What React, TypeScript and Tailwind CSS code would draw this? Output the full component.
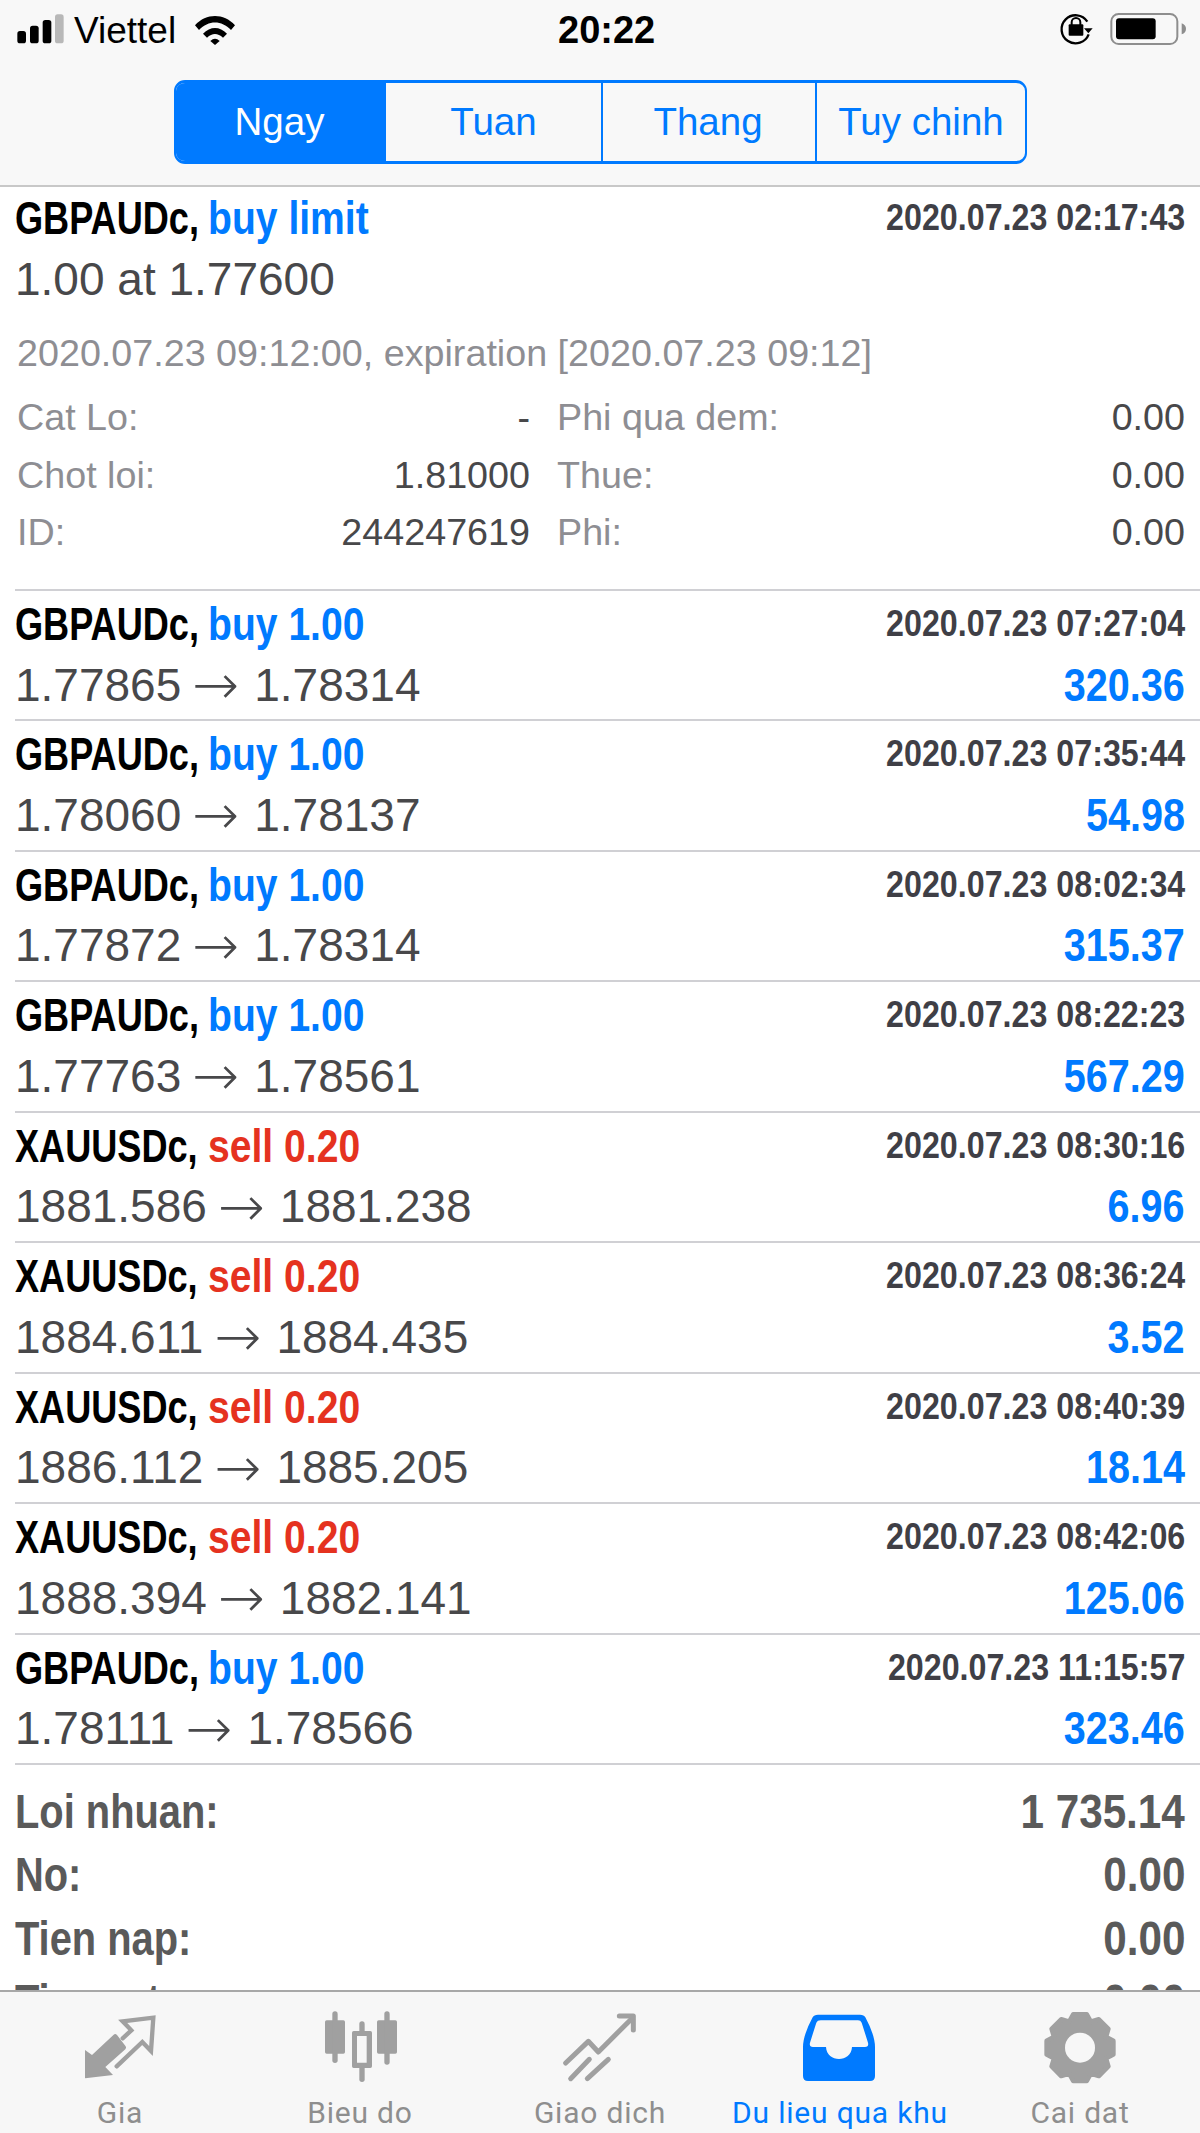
const deals = [
  { sym: "GBPAUDc,", side: "buy 1.00", open: "1.77865", close: "1.78314", time: "2020.07.23 07:27:04", profit: "320.36" },
  { sym: "GBPAUDc,", side: "buy 1.00", open: "1.78060", close: "1.78137", time: "2020.07.23 07:35:44", profit: "54.98" },
  { sym: "GBPAUDc,", side: "buy 1.00", open: "1.77872", close: "1.78314", time: "2020.07.23 08:02:34", profit: "315.37" },
  { sym: "GBPAUDc,", side: "buy 1.00", open: "1.77763", close: "1.78561", time: "2020.07.23 08:22:23", profit: "567.29" },
  { sym: "XAUUSDc,", side: "sell 0.20", open: "1881.586", close: "1881.238", time: "2020.07.23 08:30:16", profit: "6.96" },
  { sym: "XAUUSDc,", side: "sell 0.20", open: "1884.611", close: "1884.435", time: "2020.07.23 08:36:24", profit: "3.52" },
  { sym: "XAUUSDc,", side: "sell 0.20", open: "1886.112", close: "1885.205", time: "2020.07.23 08:40:39", profit: "18.14" },
  { sym: "XAUUSDc,", side: "sell 0.20", open: "1888.394", close: "1882.141", time: "2020.07.23 08:42:06", profit: "125.06" },
  { sym: "GBPAUDc,", side: "buy 1.00", open: "1.78111", close: "1.78566", time: "2020.07.23 11:15:57", profit: "323.46" },
];

const summary = [
  ["Loi nhuan:", "1 735.14"],
  ["No:", "0.00"],
  ["Tien nap:", "0.00"],
  ["Tien rut:", "0.00"],
];

// gear outline, 8 teeth, in the 300x270 icon box
const gearPath = () => {
  const pts: string[] = [];
  for (let i = 0; i < 8; i++) {
    const a = (i * Math.PI) / 4;
    [[-0.4, 84], [-0.2, 102], [0.2, 102], [0.4, 84]].forEach(([d, r]) => {
      pts.push(`${(150 + r * Math.cos(a + d)).toFixed(1)} ${(137 + r * Math.sin(a + d)).toFixed(1)}`);
    });
  }
  return "M" + pts.join("L") + "Z";
};

const Title = ({ sym, side, sell }: { sym: string; side: string; sell?: boolean }) => (
  <div className="flex whitespace-nowrap text-[46px] leading-[50px] font-bold">
    <div className="w-[193px]">
      <span className="inline-block origin-left scale-x-[.785] text-black">{sym}</span>
    </div>
    <span className={`inline-block origin-left scale-x-[.85] ${sell ? "text-[#e5321f]" : "text-[#007aff]"}`}>{side}</span>
  </div>
);

const Stamp = ({ children }: { children: string }) => (
  <span className="inline-block origin-right scale-x-[.895] whitespace-nowrap text-[36px] leading-[40px] font-bold text-[#3f3f46]">
    {children}
  </span>
);

const Detail = ({ label, value }: { label: string; value: string }) => (
  <div className="flex h-[57.5px] items-center justify-between text-[37.7px]">
    <span className="text-[#8e8e93]">{label}</span>
    <span className="text-[#48484a]">{value}</span>
  </div>
);

const TabItem = ({ label, active, children }: { label: string; active?: boolean; children: React.ReactNode }) => (
  <div className="flex flex-col items-center">
    <svg width="100" height="90" viewBox="0 0 300 270" className="mt-[10px]">
      {children}
    </svg>
    <span className={`mt-[4px] whitespace-nowrap font-['Roboto',sans-serif] text-[30px] leading-[34px] tracking-[0.8px] ${active ? "text-[#007aff]" : "text-[#8e8e8e]"}`}>
      {label}
    </span>
  </div>
);

export default function App() {
  return (
    <div className="flex h-[2133px] w-[1200px] flex-col overflow-hidden bg-white font-['Liberation_Sans',sans-serif]">
      <header className="h-[187px] shrink-0 border-b-2 border-[#c8c8c8] bg-[#f8f8f8]">
        <div className="flex h-[60px] items-center">
          <div className="flex w-[558px] items-center">
            <svg width="64" height="50" viewBox="0 0 192 150">
              <rect x="52" y="78" width="26" height="37" rx="8" fill="#000" />
              <rect x="90" y="62" width="26" height="53" rx="8" fill="#000" />
              <rect x="128" y="45" width="26" height="70" rx="8" fill="#000" />
              <rect x="165" y="28" width="26" height="87" rx="8" fill="#b8b8b8" />
            </svg>
            <span className="ml-[10px] text-[37px] leading-none text-black">Viettel</span>
            <svg width="40" height="29" viewBox="0 0 120 87" className="ml-[19px]">
              <path d="M0 28C34-9 86-9 120 28L108 42C80 12 40 12 12 42Z" fill="#000" />
              <path d="M24 53C46 30 74 30 96 53L84 65C68 50 52 50 36 65Z" fill="#000" />
              <path d="M46 75Q60 62 74 75L60 87Z" fill="#000" />
            </svg>
          </div>
          <span className="text-[38px] leading-none font-bold text-black">20:22</span>
          <svg width="160" height="50" viewBox="0 0 480 150" className="ml-auto">
            <path d="M142 50A42 42 0 1 0 146 88" fill="none" stroke="#000" strokeWidth="7" />
            <path d="M132 70L158 70L145 85Z" fill="#000" />
            <path d="M95 60V52A13 13 0 0 1 121 52V60" fill="none" stroke="#000" strokeWidth="6" />
            <rect x="86" y="58" width="44" height="34" rx="3" fill="#000" />
            <rect x="214" y="27" width="198" height="90" rx="22" fill="none" stroke="#8e8e8e" strokeWidth="6" />
            <rect x="228" y="40" width="119" height="63" rx="9" fill="#000" />
            <path d="M425 55Q438 60 438 72Q438 84 425 88Z" fill="#8e8e8e" />
          </svg>
        </div>
        <div className="mt-[20px] ml-[174px] grid h-[84px] w-[853px] grid-cols-[210px_215px_214px_1fr] overflow-hidden rounded-[11px] border-x-2 border-y-[3px] border-[#007aff] text-[38.5px] text-[#007aff]">
          <div className="flex items-center justify-center bg-[#007aff] pr-[3px] text-white">Ngay</div>
          <div className="flex items-center justify-center">Tuan</div>
          <div className="flex items-center justify-center border-l-2 border-[#007aff] pr-[2px]">Thang</div>
          <div className="flex items-center justify-center border-l-2 border-[#007aff]">Tuy chinh</div>
        </div>
      </header>

      <main className="min-h-0 flex-1 overflow-hidden">
        <section className="ml-[15px] h-[404px] border-b-2 border-[#d0d0d4] pr-[15px]">
          <div className="flex h-[62px] items-center justify-between">
            <Title sym="GBPAUDc," side="buy limit" />
            <Stamp>2020.07.23 02:17:43</Stamp>
          </div>
          <div className="flex h-[60px] items-center text-[46px] text-[#48484a]">1.00 at 1.77600</div>
          <div className="mt-[13px] flex h-[62px] items-center pl-[2px] whitespace-nowrap text-[37.7px] text-[#8e8e93]">
            2020.07.23 09:12:00, expiration [2020.07.23 09:12]
          </div>
          <div className="mt-[5px] grid grid-cols-[513px_1fr] gap-x-[27px] pl-[2px]">
            <Detail label="Cat Lo:" value="-" />
            <Detail label="Phi qua dem:" value="0.00" />
            <Detail label="Chot loi:" value="1.81000" />
            <Detail label="Thue:" value="0.00" />
            <Detail label="ID:" value="244247619" />
            <Detail label="Phi:" value="0.00" />
          </div>
        </section>

        {deals.map((d) => (
          <div key={d.time} className="ml-[15px] h-[130.44px] border-b-2 border-[#d0d0d4] pr-[15px]">
            <div className="flex h-[64px] items-center justify-between pt-[2px]">
              <Title sym={d.sym} side={d.side} sell={d.side.startsWith("sell")} />
              <Stamp>{d.time}</Stamp>
            </div>
            <div className="flex h-[60px] items-center justify-between">
              <span className="flex items-center text-[46px] whitespace-nowrap text-[#48484a]">
                {d.open}
                <span className="mr-[15px] ml-[11px] font-['DejaVu_Sans',sans-serif] text-[56px] leading-none font-light">→</span>
                {d.close}
              </span>
              <span className="inline-block origin-right scale-x-[.86] text-[46px] font-bold text-[#007aff]">{d.profit}</span>
            </div>
          </div>
        ))}

        <section className="px-[15px] pt-[15px]">
          {summary.map(([label, value]) => (
            <div key={label} className="flex h-[63.5px] items-center justify-between text-[48px] font-bold whitespace-nowrap text-[#5a5a5a]">
              <span className="inline-block origin-left scale-x-[.83]">{label}</span>
              <span className="inline-block origin-right scale-x-[.88]">{value}</span>
            </div>
          ))}
        </section>
      </main>

      <nav className="grid h-[143px] shrink-0 grid-cols-5 border-t-2 border-[#a8a8a8] bg-[#f7f7f7]">
        <TabItem label="Gia">
          <path d="M45 228V144L66 159L131 98Q136 94 141 99L167 133Q170 138 166 142L106 195L129 219L52 228Q45 229 45 228Z" fill="#a0a0a0" />
          <path d="M140 193L217 120L243 147L250 47L158 58L184 85L158 109" fill="none" stroke="#a0a0a0" strokeWidth="13" strokeLinecap="round" />
        </TabItem>
        <TabItem label="Bieu do">
          <g fill="#a0a0a0">
            <rect x="45" y="55" width="60" height="100" rx="5" />
            <rect x="67" y="28" width="16" height="155" rx="8" />
            <path fillRule="evenodd" d="M126 92Q126 87 131 87H181Q186 87 186 92V193Q186 198 181 198H131Q126 198 126 193ZM141 102V182H170V102Z" />
            <rect x="148" y="58" width="16" height="40" rx="8" />
            <rect x="148" y="190" width="16" height="50" rx="8" />
            <rect x="201" y="55" width="60" height="100" rx="5" />
            <rect x="223" y="28" width="16" height="160" rx="8" />
          </g>
        </TabItem>
        <TabItem label="Giao dich">
          <g fill="none" stroke="#a0a0a0" strokeWidth="15" strokeLinecap="round" strokeLinejoin="round">
            <path d="M47 183L115 118L145 150L245 50" />
            <path d="M208 42H250V84" />
            <path d="M62 230L118 172" />
            <path d="M112 230L175 172" />
          </g>
        </TabItem>
        <TabItem label="Du lieu qua khu" active>
          <path fillRule="evenodd" d="M84 38H210Q222 38 226 46Q255 100 255 135V222Q255 237 240 237H54Q39 237 39 222V135Q39 100 68 46Q72 38 84 38Z" fill="#007aff" />
          <path d="M92 55H204Q212 55 215 62L234 122Q237 135 225 135H186C184 183 110 183 108 135H69Q57 135 60 122L79 62Q82 55 92 55Z" fill="#f7f7f7" />
        </TabItem>
        <TabItem label="Cai dat">
          <path d={gearPath()} fill="#a0a0a0" stroke="#a0a0a0" strokeWidth="14" strokeLinejoin="round" />
          <circle cx="150" cy="137" r="45" fill="#f7f7f7" />
        </TabItem>
      </nav>
    </div>
  );
}
